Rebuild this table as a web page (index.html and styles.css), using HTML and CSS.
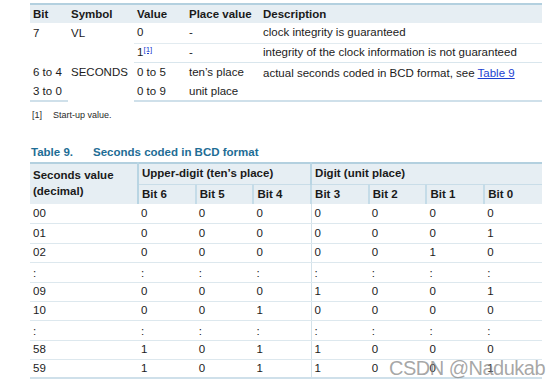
FILE: index.html
```html
<!DOCTYPE html>
<html>
<head>
<meta charset="utf-8">
<link rel="stylesheet" href="styles.css">
</head>
<body>
<div class="page">
  <table class="t1">
    <colgroup>
      <col class="c-bit">
      <col class="c-sym">
      <col class="c-val">
      <col class="c-place">
      <col class="c-desc">
    </colgroup>
    <thead>
      <tr class="h19">
        <th>Bit</th>
        <th>Symbol</th>
        <th>Value</th>
        <th>Place value</th>
        <th>Description</th>
      </tr>
    </thead>
    <tbody>
      <tr class="h20">
        <td rowspan="2" class="top">7</td>
        <td rowspan="2" class="top">VL</td>
        <td class="bb">0</td>
        <td class="bb">-</td>
        <td class="bb">clock integrity is guaranteed</td>
      </tr>
      <tr class="h19 full">
        <td>1<sup><a href="#">[1]</a></sup></td>
        <td>-</td>
        <td>integrity of the clock information is not guaranteed</td>
      </tr>
      <tr class="h20">
        <td>6 to 4</td>
        <td rowspan="2" class="top">SECONDS</td>
        <td>0 to 5</td>
        <td>ten’s place</td>
        <td rowspan="2" class="top">actual seconds coded in BCD format, see <a href="#">Table 9</a></td>
      </tr>
      <tr class="h19 last">
        <td>3 to 0</td>
        <td>0 to 9</td>
        <td>unit place</td>
      </tr>
    </tbody>
  </table>

  <div class="note"><span class="note-num">[1]</span><span>Start-up value.</span></div>

  <div class="caption"><span class="cap-num">Table 9.</span><span>Seconds coded in BCD format</span></div>

  <table class="t2">
    <colgroup>
      <col class="c-first">
      <col class="c-b"><col class="c-b"><col class="c-b">
      <col class="c-b"><col class="c-b"><col class="c-b"><col class="c-b">
    </colgroup>
    <thead>
      <tr class="h21">
        <th rowspan="2" class="first">Seconds value<br>(decimal)</th>
        <th colspan="3" class="grp">Upper-digit (ten’s place)</th>
        <th colspan="4" class="grp">Digit (unit place)</th>
      </tr>
      <tr class="h20">
        <th class="sub">Bit 6</th>
        <th class="sub">Bit 5</th>
        <th class="sub">Bit 4</th>
        <th class="sub">Bit 3</th>
        <th class="sub">Bit 2</th>
        <th class="sub">Bit 1</th>
        <th class="sub">Bit 0</th>
      </tr>
    </thead>
    <tbody>
      <tr class="h19"><td>00</td><td>0</td><td>0</td><td>0</td><td class="sep">0</td><td>0</td><td>0</td><td>0</td></tr>
      <tr class="h20"><td>01</td><td>0</td><td>0</td><td>0</td><td class="sep">0</td><td>0</td><td>0</td><td>1</td></tr>
      <tr class="h19"><td>02</td><td>0</td><td>0</td><td>0</td><td class="sep">0</td><td>0</td><td>1</td><td>0</td></tr>
      <tr class="h20 colon"><td>:</td><td>:</td><td>:</td><td>:</td><td class="sep">:</td><td>:</td><td>:</td><td>:</td></tr>
      <tr class="h19"><td>09</td><td>0</td><td>0</td><td>0</td><td class="sep">1</td><td>0</td><td>0</td><td>1</td></tr>
      <tr class="h19"><td>10</td><td>0</td><td>0</td><td>1</td><td class="sep">0</td><td>0</td><td>0</td><td>0</td></tr>
      <tr class="h20 colon"><td>:</td><td>:</td><td>:</td><td>:</td><td class="sep">:</td><td>:</td><td>:</td><td>:</td></tr>
      <tr class="h19"><td>58</td><td>1</td><td>0</td><td>1</td><td class="sep">1</td><td>0</td><td>0</td><td>0</td></tr>
      <tr class="h19 last"><td>59</td><td>1</td><td>0</td><td>1</td><td class="sep">1</td><td>0</td><td>0</td><td>1</td></tr>
    </tbody>
  </table>

  <div class="watermark">CSDN @Nadukab</div>
</div>
</body>
</html>
```

FILE: styles.css
```css
html, body {
  margin: 0;
  padding: 0;
  background: #ffffff;
}

body {
  font-family: "Liberation Sans", Arial, sans-serif;
  font-size: 11.5px;
  color: #1c1c1c;
}

.page {
  position: relative;
  width: 560px;
  height: 386px;
  padding: 3px 0 0 30px;
  box-sizing: border-box;
}

table {
  border-collapse: collapse;
  table-layout: fixed;
}

th, td {
  padding: 0 0 0 3px;
  text-align: left;
  vertical-align: middle;
  line-height: 13px;
  white-space: nowrap;
  overflow: visible;
}

th {
  font-weight: bold;
  background: #e6eef3;
  color: #1a1a1a;
}

.h19 { height: 19px; }
.h20 { height: 20px; }
.h21 { height: 21px; }

/* ---------- table 1 ---------- */
.t1 {
  width: 512px;
  border-top: 2px solid #b3d0df;
}

.t1 .c-bit { width: 38px; }
.t1 .c-sym { width: 66px; }
.t1 .c-val { width: 52px; }
.t1 .c-place { width: 74px; }
.t1 .c-desc { width: 282px; }

.t1 td.bb { border-bottom: 1px solid #e2ebf0; }
.t1 tr.full td { border-bottom: 1px solid #d9e6ed; }
.t1 td.top { vertical-align: top; padding-top: 4px; }
.t1 tr.last td, .t1 td.top[rowspan="2"]:last-child { border-bottom: 2px solid #cfe0ea; }
.t1 tr.last td { border-bottom: 2px solid #cfe0ea; }

sup {
  font-size: 8px;
  line-height: 0;
  vertical-align: 4px;
}

a {
  color: #1d3fd1;
  text-decoration: underline;
}

/* ---------- footnote ---------- */
.note {
  display: flex;
  margin-top: 8px;
  padding-left: 2px;
  font-size: 9px;
  line-height: 11px;
  color: #2a2a2a;
}

.note-num {
  width: 21px;
}

/* ---------- caption ---------- */
.caption {
  display: flex;
  margin-top: 25px;
  padding-left: 1px;
  font-weight: bold;
  font-size: 11.5px;
  line-height: 13px;
  color: #1e6d95;
}

.cap-num {
  width: 62px;
}

/* ---------- table 2 ---------- */
.t2 {
  width: 512px;
  margin-top: 3px;
  border-top: 2px solid #b3d0df;
}

.t2 .c-first { width: 108px; }
.t2 .c-b { width: 57.7px; }

.t2 th.first {
  vertical-align: top;
  padding-top: 3px;
  line-height: 16px;
  border-right: 2px solid #b9d5e3;
}

.t2 th.grp {
  border-left: 2px solid #b9d5e3;
  border-bottom: 1px solid #c9dde8;
}

.t2 th.sub {
  border-left: 2px solid #c5dce8;
}

.t2 td {
  border-bottom: 1px solid #dde8ee;
}

.t2 td.sep {
  border-left: 1px solid #d3e2ea;
}

.t2 tr.colon td {
  padding-top: 2px;
}

.t2 tr.last td {
  border-bottom: 2px solid #cfe0ea;
}

/* ---------- watermark ---------- */
.watermark {
  position: absolute;
  left: 389px;
  top: 356px;
  font-family: "Liberation Sans", Arial, sans-serif;
  font-size: 20px;
  letter-spacing: -0.5px;
  line-height: 24px;
  color: rgba(128, 128, 128, 0.7);
  white-space: nowrap;
}
```
